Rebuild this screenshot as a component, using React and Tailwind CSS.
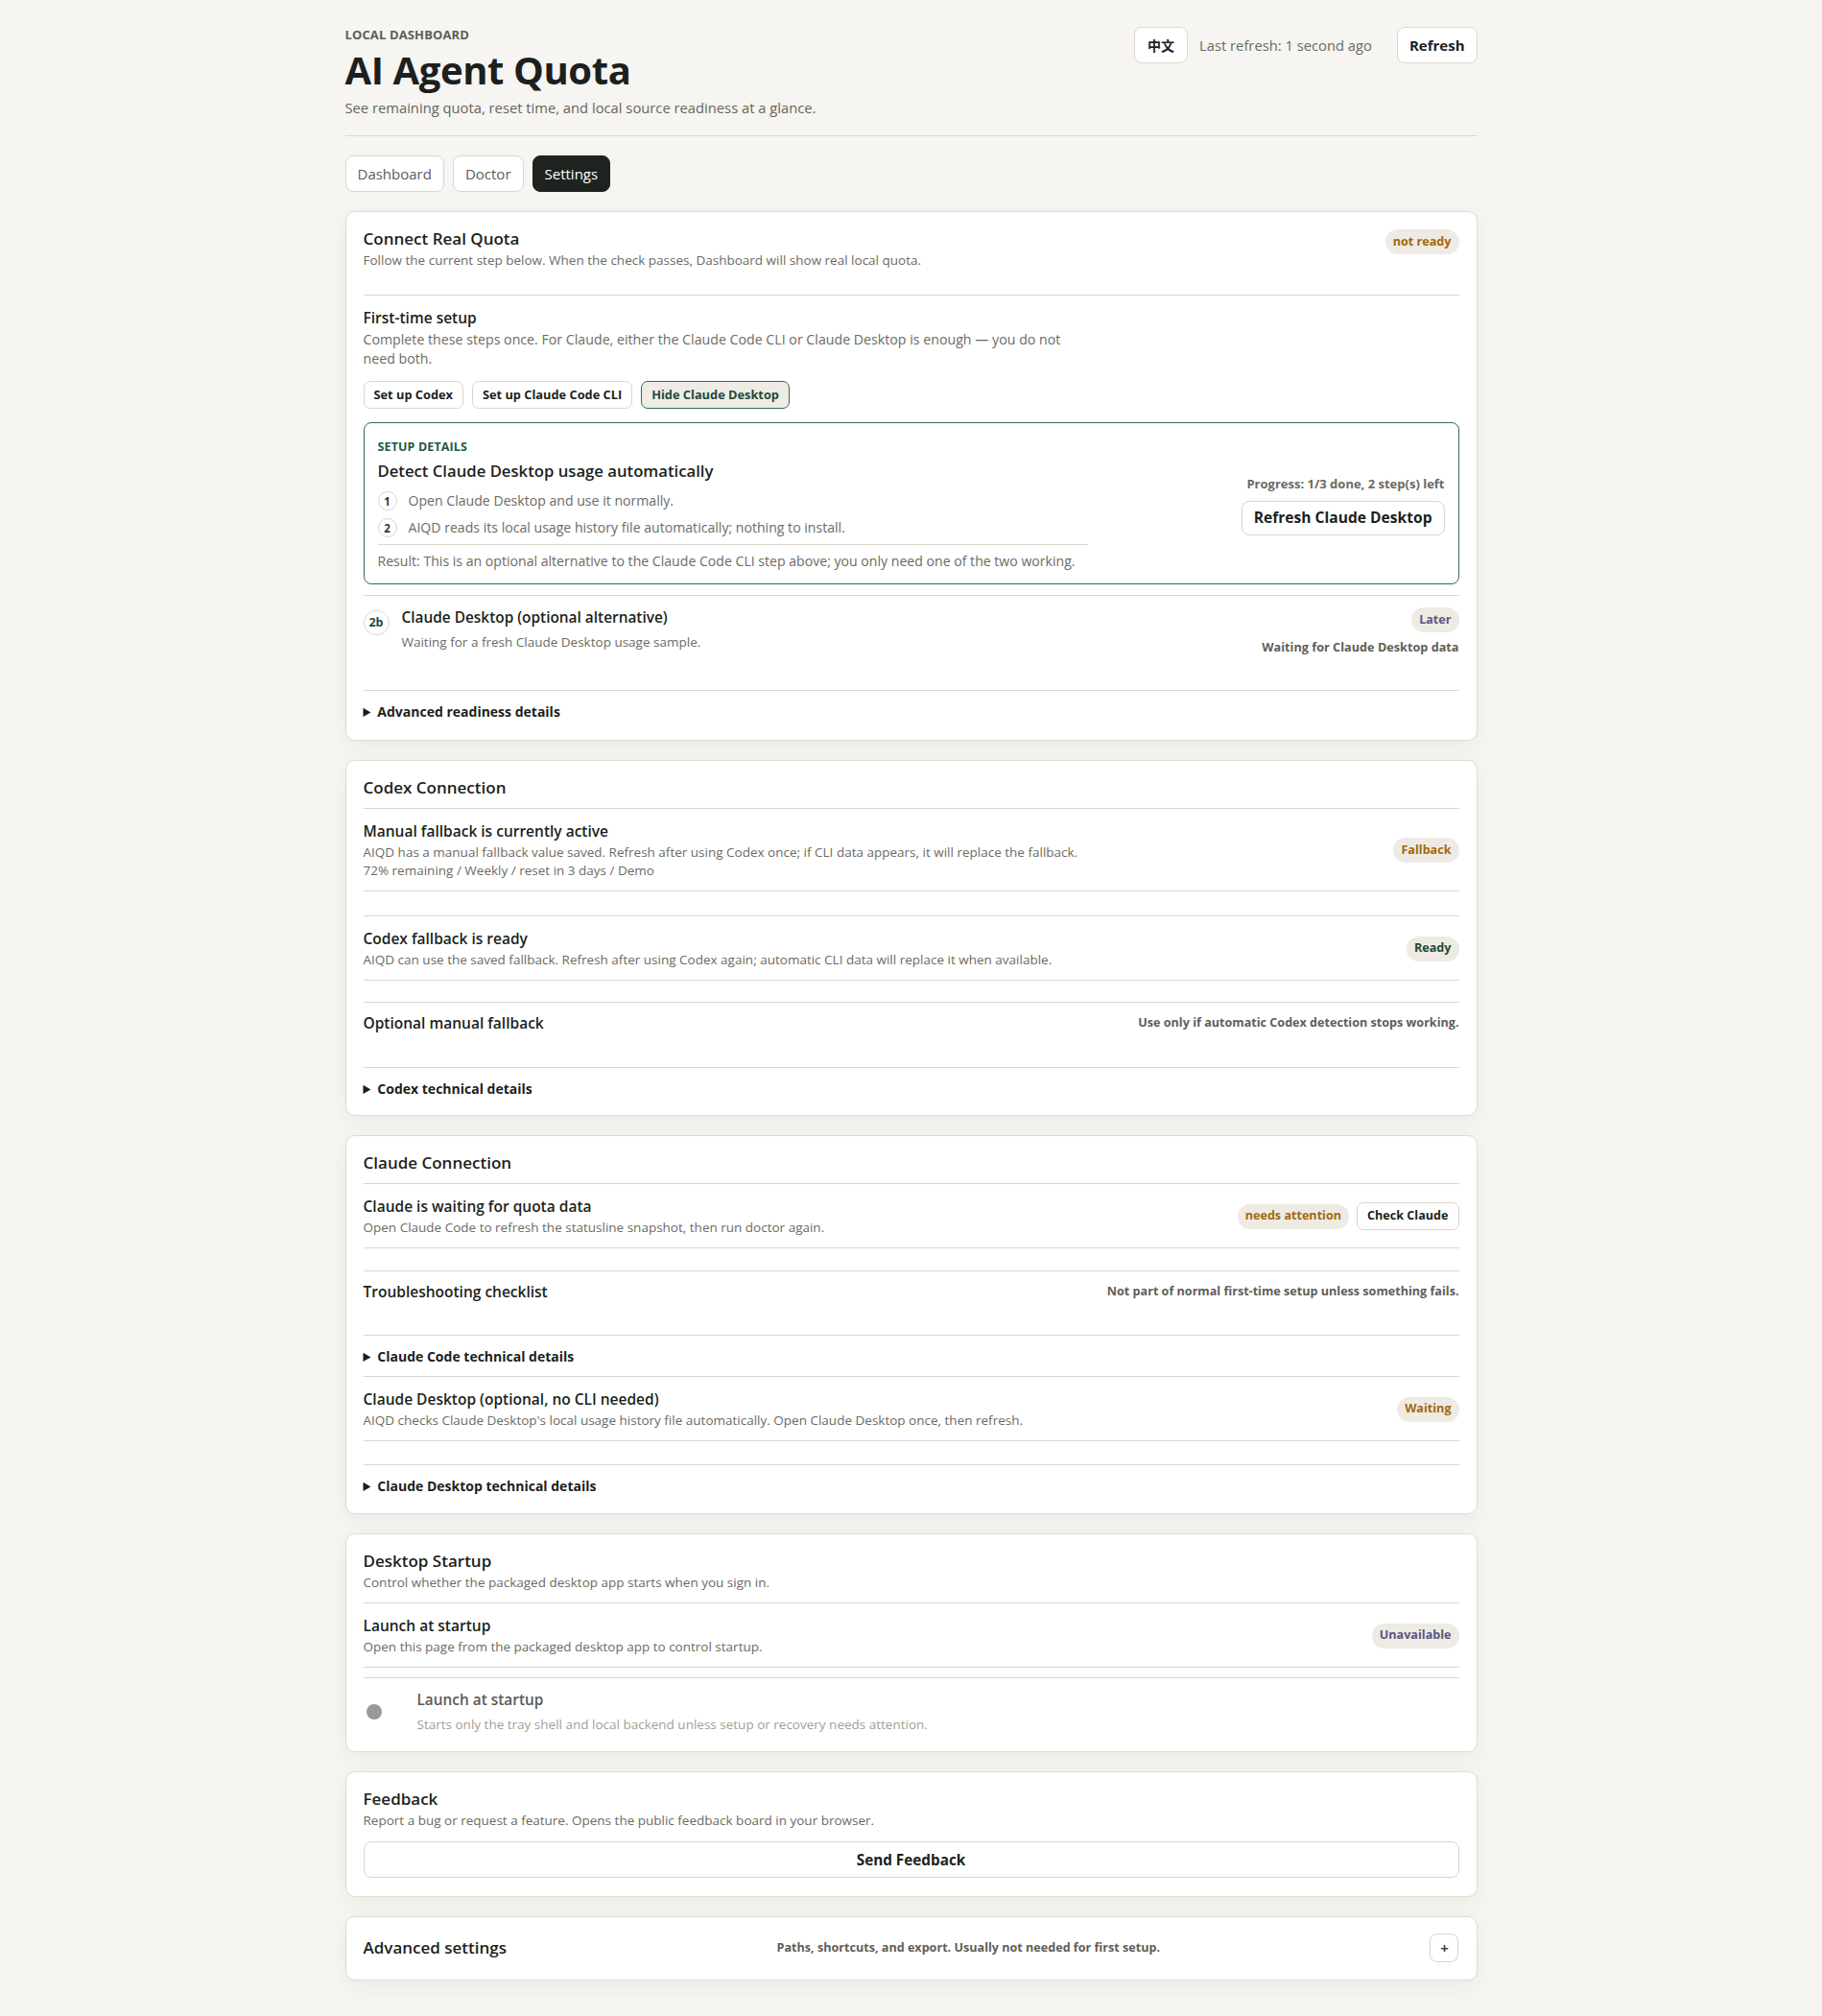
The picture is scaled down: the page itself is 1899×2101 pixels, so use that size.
import React from "react";

const muted = "text-[#6c6b64]";

const Badge = ({ tone = "amber", className = "", children }) => {
  const tones = {
    amber: "text-[#a4680a]",
    green: "text-[#1c4a37]",
    purple: "text-[#5d5684]",
  };
  return (
    <span
      className={`inline-flex h-[26px] shrink-0 items-center rounded-full bg-[#eeebe4] px-[8px] text-[12.6px] font-bold ${tones[tone]} ${className}`}
    >
      {children}
    </span>
  );
};

const Card = ({ className = "pb-[19px]", children }) => (
  <section
    className={`rounded-[10px] border border-[#e0dbd0] bg-white px-[18px] pt-[17px] shadow-[0_6px_22px_rgba(60,50,30,0.06)] ${className}`}
  >
    {children}
  </section>
);

const Details = ({ label, className = "" }) => (
  <details className={className}>
    <summary className="cursor-pointer text-[14px] font-bold leading-5 text-[#1b1f1c]">
      {label}
    </summary>
  </details>
);

// one status row: title + description on the left, badge / actions on the right
const StatusRow = ({ title, lines, right, className = "" }) => (
  <div className={`flex items-center justify-between gap-6 pt-3 pb-[11px] ${className}`}>
    <div>
      <p className="text-[15.5px] font-semibold leading-[22px] text-[#1b1f1c]">{title}</p>
      <div className="mt-[2px]">
        {lines.map((line) => (
          <p key={line} className={`text-[13.5px] leading-[19px] ${muted}`}>
            {line}
          </p>
        ))}
      </div>
    </div>
    {right}
  </div>
);

const NoteRow = ({ title, note, className = "" }) => (
  <div className={`flex items-start justify-between pt-[10px] ${className}`}>
    <p className="text-[15.5px] font-semibold leading-[22px] text-[#1b1f1c]">{title}</p>
    <p className="text-[12.6px] font-bold leading-[22px] text-[#5f5e58]">{note}</p>
  </div>
);

const steps = [
  "Open Claude Desktop and use it normally.",
  "AIQD reads its local usage history file automatically; nothing to install.",
];

export default function App() {
  return (
    <div className="min-h-screen bg-[#f6f5f1] pb-10 font-['Open_Sans','Noto_Sans',sans-serif] text-[#1b1f1c] antialiased">
      <div className="mx-auto w-[1180px] pt-7">
        {/* header */}
        <header className="flex items-start justify-between border-b border-[#ddd7cb] pb-[19px]">
          <div>
            <p className="text-[13px] font-bold uppercase leading-4 tracking-[0.01em] text-[#5b5e58]">
              Local dashboard
            </p>
            <h1 className="mt-[9px] text-[40px] font-bold leading-[40px] tracking-[-0.01em] text-[#1c201d]">
              AI Agent Quota
            </h1>
            <p className="mt-[9px] text-[14.75px] leading-5 text-[#66655e]">
              See remaining quota, reset time, and local source readiness at a glance.
            </p>
          </div>
          <div className="flex items-center gap-3">
            <button className="h-[38px] rounded-[8px] border border-[#ddd7cb] bg-white px-[13px] font-['Noto_Sans_CJK_SC',sans-serif] text-[14px] font-bold text-[#1c201d]">
              中文
            </button>
            <span className="mr-[14px] text-[14.75px] text-[#6b6a63]">Last refresh: 1 second ago</span>
            <button className="h-[38px] rounded-[8px] border border-[#ddd7cb] bg-white px-3 text-[15px] font-bold text-[#1c201d]">
              Refresh
            </button>
          </div>
        </header>

        {/* tabs */}
        <nav className="mt-5 flex gap-[9px]">
          <button className="h-[38px] rounded-[8px] border border-[#ddd7cb] bg-white px-3 text-[15px] text-[#5e5d57]">
            Dashboard
          </button>
          <button className="h-[38px] rounded-[8px] border border-[#ddd7cb] bg-white px-3 text-[15px] text-[#5e5d57]">
            Doctor
          </button>
          <button className="h-[38px] rounded-[8px] border border-[#1f231f] bg-[#1f231f] px-3 text-[15px] text-white">
            Settings
          </button>
        </nav>

        <main className="mt-5 flex flex-col gap-5">
          {/* Connect Real Quota */}
          <Card>
            <div className="flex items-start justify-between pb-[26px]">
              <div>
                <h2 className="text-[17px] font-semibold leading-[22px]">Connect Real Quota</h2>
                <p className={`mt-[2px] text-[13.5px] leading-[19px] ${muted}`}>
                  Follow the current step below. When the check passes, Dashboard will show real local quota.
                </p>
              </div>
              <Badge className="mt-px">not ready</Badge>
            </div>

            <div className="border-t border-[#ddd7cb] pt-3">
              <h3 className="text-[15.5px] font-semibold leading-[22px]">First-time setup</h3>
              <p className={`mt-[2px] max-w-[740px] text-[14.2px] leading-5 ${muted}`}>
                Complete these steps once. For Claude, either the Claude Code CLI or Claude Desktop is enough — you do not
                need both.
              </p>
              <div className="mt-[13px] flex gap-[9px]">
                <button className="h-[29px] rounded-[7px] border border-[#dcd6ca] bg-white px-[10px] text-[12.8px] font-bold">
                  Set up Codex
                </button>
                <button className="h-[29px] rounded-[7px] border border-[#dcd6ca] bg-white px-[10px] text-[12.8px] font-bold">
                  Set up Claude Code CLI
                </button>
                <button className="h-[29px] rounded-[7px] border border-[#2f6b57] bg-[#efece5] px-[10px] text-[12.8px] font-bold text-[#1f4a3b]">
                  Hide Claude Desktop
                </button>
              </div>

              <div className="mt-[14px] flex items-center justify-between rounded-[8px] border border-[#2f6b57] px-[14px] pt-[17px] pb-[13px]">
                <div className="w-[740px]">
                  <p className="text-[12.5px] font-bold uppercase leading-4 tracking-[0.01em] text-[#1e5a45]">
                    Setup details
                  </p>
                  <h4 className="mt-[5px] text-[16.7px] font-semibold leading-6">
                    Detect Claude Desktop usage automatically
                  </h4>
                  <ol className="mt-[9px] flex flex-col gap-2">
                    {steps.map((s, i) => (
                      <li key={s} className={`flex items-center gap-3 text-[14.1px] leading-5 ${muted}`}>
                        <span className="grid h-5 w-5 shrink-0 place-items-center rounded-full border border-[#dcd6ca] text-[11.5px] font-bold text-[#1d3b30]">
                          {i + 1}
                        </span>
                        {s}
                      </li>
                    ))}
                  </ol>
                  <p className={`mt-[7px] border-t border-[#dcd6ca] pt-[7px] text-[14.1px] leading-5 ${muted}`}>
                    Result: This is an optional alternative to the Claude Code CLI step above; you only need one of the two
                    working.
                  </p>
                </div>
                <div className="flex flex-col items-end gap-[9px]">
                  <p className="text-[13px] font-bold leading-[18px] text-[#6b6a63]">
                    Progress: 1/3 done, 2 step(s) left
                  </p>
                  <button className="h-9 rounded-[8px] border border-[#dcd6ca] bg-white px-3 text-[15.6px] font-bold">
                    Refresh Claude Desktop
                  </button>
                </div>
              </div>

              <div className="mt-[11px] flex items-start justify-between border-y border-[#ddd7cb] pt-3 pb-9">
                <div className="flex items-start gap-[13px]">
                  <span className="mt-[3px] grid h-[26px] w-[27px] place-items-center rounded-full border border-[#ddd8cc] text-[12.5px] font-bold text-[#1d4a3a]">
                    2b
                  </span>
                  <div>
                    <p className="text-[15.4px] font-semibold leading-[22px]">Claude Desktop (optional alternative)</p>
                    <p className={`mt-1 text-[13.5px] leading-5 ${muted}`}>
                      Waiting for a fresh Claude Desktop usage sample.
                    </p>
                  </div>
                </div>
                <div className="flex flex-col items-end gap-[6px]">
                  <Badge tone="purple">Later</Badge>
                  <p className="text-[12.7px] font-bold leading-[18px] text-[#5f5e58]">Waiting for Claude Desktop data</p>
                </div>
              </div>

              <Details label="Advanced readiness details" className="pt-3" />
            </div>
          </Card>

          {/* Codex Connection */}
          <Card className="pb-[17px]">
            <h2 className="border-b border-[#ddd7cb] pb-[10px] text-[17px] font-semibold leading-[22px]">
              Codex Connection
            </h2>
            <StatusRow
              className="border-b border-[#ddd7cb]"
              title="Manual fallback is currently active"
              lines={[
                "AIQD has a manual fallback value saved. Refresh after using Codex once; if CLI data appears, it will replace the fallback.",
                "72% remaining / Weekly / reset in 3 days / Demo",
              ]}
              right={<Badge>Fallback</Badge>}
            />
            <StatusRow
              className="mt-[25px] border-y border-[#ddd7cb]"
              title="Codex fallback is ready"
              lines={[
                "AIQD can use the saved fallback. Refresh after using Codex again; automatic CLI data will replace it when available.",
              ]}
              right={<Badge tone="green">Ready</Badge>}
            />
            <NoteRow
              className="mt-[22px] border-y border-[#ddd7cb] pb-[35px]"
              title="Optional manual fallback"
              note="Use only if automatic Codex detection stops working."
            />
            <Details label="Codex technical details" className="pt-3" />
          </Card>

          {/* Claude Connection */}
          <Card className="pb-[18px]">
            <h2 className="border-b border-[#ddd7cb] pb-[10px] text-[17px] font-semibold leading-[22px]">
              Claude Connection
            </h2>
            <StatusRow
              className="border-b border-[#ddd7cb]"
              title="Claude is waiting for quota data"
              lines={["Open Claude Code to refresh the statusline snapshot, then run doctor again."]}
              right={
                <div className="flex items-center gap-2">
                  <Badge>needs attention</Badge>
                  <button className="h-[29px] rounded-[7px] border border-[#dcd6ca] bg-white px-[10px] text-[12.6px] font-bold">
                    Check Claude
                  </button>
                </div>
              }
            />
            <NoteRow
              className="mt-[23px] border-y border-[#ddd7cb] pb-[34px]"
              title="Troubleshooting checklist"
              note="Not part of normal first-time setup unless something fails."
            />
            <Details label="Claude Code technical details" className="border-b border-[#ddd7cb] pt-3 pb-[10px]" />
            <StatusRow
              className="border-b border-[#ddd7cb]"
              title="Claude Desktop (optional, no CLI needed)"
              lines={[
                "AIQD checks Claude Desktop's local usage history file automatically. Open Claude Desktop once, then refresh.",
              ]}
              right={<Badge>Waiting</Badge>}
            />
            <Details label="Claude Desktop technical details" className="mt-6 border-t border-[#ddd7cb] pt-3" />
          </Card>

          {/* Desktop Startup */}
          <Card>
            <div className="border-b border-[#ddd7cb] pb-[11px]">
              <h2 className="text-[17px] font-semibold leading-[22px]">Desktop Startup</h2>
              <p className={`mt-[2px] text-[13.5px] leading-[19px] ${muted}`}>
                Control whether the packaged desktop app starts when you sign in.
              </p>
            </div>
            <StatusRow
              className="border-b border-[#ddd7cb]"
              title="Launch at startup"
              lines={["Open this page from the packaged desktop app to control startup."]}
              right={<Badge tone="purple">Unavailable</Badge>}
            />
            <div className="mt-[10px] flex items-center gap-3 border-t border-[#ddd7cb] pt-[13px]">
              <span className="flex h-6 w-11 items-center pl-[3px]" role="switch" aria-checked="false" aria-disabled="true">
                <span className="h-4 w-4 rounded-full bg-[#979b96]" />
              </span>
              <div>
                <p className="text-[15.4px] font-semibold leading-5 text-[#5b5b56]">Launch at startup</p>
                <p className="mt-[6px] text-[13.5px] leading-[18px] text-[#a09f98]">
                  Starts only the tray shell and local backend unless setup or recovery needs attention.
                </p>
              </div>
            </div>
          </Card>

          {/* Feedback */}
          <Card>
            <h2 className="text-[17px] font-semibold leading-[22px]">Feedback</h2>
            <p className={`mt-[2px] text-[13.5px] leading-[19px] ${muted}`}>
              Report a bug or request a feature. Opens the public feedback board in your browser.
            </p>
            <button className="mt-3 h-[38px] w-full rounded-[8px] border border-[#dcd6ca] bg-white text-[15.3px] font-bold">
              Send Feedback
            </button>
          </Card>

          {/* Advanced settings */}
          <Card className="pb-[18px]">
            <div className="flex items-center justify-between">
              <h2 className="text-[17px] font-semibold leading-[22px]">Advanced settings</h2>
              <p className="text-[12.6px] font-bold text-[#5f5e58]">
                Paths, shortcuts, and export. Usually not needed for first setup.
              </p>
              <button className="grid h-[30px] w-[30px] place-items-center rounded-[8px] border border-[#dcd6ca] bg-white text-[15px] font-bold text-[#3a4a44]">
                +
              </button>
            </div>
          </Card>
        </main>
      </div>
    </div>
  );
}
